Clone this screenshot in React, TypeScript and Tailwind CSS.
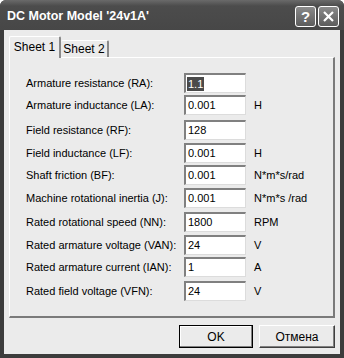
import React from "react";

const rows = [
  { label: "Armature resistance (RA):", value: "1.1", unit: "", mt: "mt-[15px]", selected: true },
  { label: "Armature inductance (LA):", value: "0.001", unit: "H", mt: "mt-[2px]" },
  { label: "Field resistance (RF):", value: "128", unit: "", mt: "mt-[5px]" },
  { label: "Field inductance (LF):", value: "0.001", unit: "H", mt: "mt-[3px]" },
  { label: "Shaft friction (BF):", value: "0.001", unit: "N*m*s/rad", mt: "mt-[2px]" },
  { label: "Machine rotational inertia (J):", value: "0.001", unit: "N*m*s /rad", mt: "mt-[3px]" },
  { label: "Rated rotational speed (NN):", value: "1800", unit: "RPM", mt: "mt-[4px]" },
  { label: "Rated armature voltage (VAN):", value: "24", unit: "V", mt: "mt-[3px]" },
  { label: "Rated armature current (IAN):", value: "1", unit: "A", mt: "mt-[2px]" },
  { label: "Rated field voltage (VFN):", value: "24", unit: "V", mt: "mt-[4px]" },
];

const TitleButton = ({ children }: { children: React.ReactNode }) => (
  <div className="w-[21px] h-[21px] rounded-[3px] border border-white bg-[linear-gradient(#8a8a8a,#5c5c5c)] flex items-center justify-center text-white">
    {children}
  </div>
);

const App: React.FC = () => {
  return (
    <div className="w-[344px] h-[358px] bg-[#3c3c3c] rounded-t-[6px] flex flex-col overflow-hidden font-['Liberation_Sans',Arial,sans-serif] text-[11px] text-black">
      {/* title bar */}
      <div className="h-[30px] shrink-0 flex items-center justify-between pl-[7px] pr-[5px] bg-[linear-gradient(#6a6a6a,#4c4c4c_20%,#474747)]">
        <span className="text-white font-bold text-[12.5px] mt-[2px]">
          DC Motor Model '24v1A'
        </span>
        <div className="flex gap-[2px] mt-[2px]">
          <TitleButton>
            <span className="font-bold text-[15px] leading-none">?</span>
          </TitleButton>
          <TitleButton>
            <svg width="13" height="13" viewBox="0 0 13 13">
              <path d="M2 2 L11 11 M11 2 L2 11" stroke="white" strokeWidth="2.2" />
            </svg>
          </TitleButton>
        </div>
      </div>

      {/* client area */}
      <div className="flex-1 mx-[4px] mb-[4px] bg-[#ebebeb] flex flex-col px-[5px] pt-[6px]">
        {/* tabs */}
        <div className="flex items-end h-[21px] relative z-10">
          <div className="w-[52px] h-[22px] -mb-[1px] bg-[#ebebeb] border-l border-t border-white border-r-2 border-r-[#8a8a8a] rounded-t-[2px] flex items-center justify-center text-[12px] pb-[1px]">
            Sheet 1
          </div>
          <div className="w-[48px] h-[17px] bg-[#ebebeb] border-t border-white border-r-2 border-r-[#8a8a8a] rounded-t-[2px] flex items-center justify-center text-[12px]">
            Sheet 2
          </div>
        </div>
        <div className="h-[261px] w-[326px] border-l border-t border-white border-r-2 border-b-2 border-r-[#7a7a7a] border-b-[#7a7a7a] flex flex-col pl-[16px]">
          {rows.map((r) => (
            <div key={r.label} className={`flex items-center h-[20px] ${r.mt}`}>
              <span className="w-[158px] whitespace-nowrap">{r.label}</span>
              <div className="w-[62px] h-[20px] bg-white border-l-2 border-t-2 border-l-[#808080] border-t-[#808080] border-r border-b border-r-[#dcdcdc] border-b-[#dcdcdc] flex items-center pl-[1px]">
                {r.selected ? (
                  <span className="bg-[#4a4a4a] text-white px-[1px] leading-[14px]">{r.value}</span>
                ) : (
                  <span className="pl-[1px]">{r.value}</span>
                )}
              </div>
              <span className="ml-[8px] whitespace-nowrap">{r.unit}</span>
            </div>
          ))}
        </div>
        {/* buttons */}
        <div className="flex justify-end gap-[6px] mt-[7px]">
          <button className="w-[74px] h-[23px] bg-[#ebebeb] border border-black shadow-[inset_-1px_-1px_0_#808080,inset_1px_1px_0_#ffffff] text-[12px]">
            OK
          </button>
          <button className="w-[76px] h-[23px] bg-[#ebebeb] border-r border-b border-r-[#404040] border-b-[#404040] border-l border-t border-l-white border-t-white shadow-[inset_-1px_-1px_0_#808080] text-[12px]">
            Отмена
          </button>
        </div>
      </div>
    </div>
  );
};

export default App;
